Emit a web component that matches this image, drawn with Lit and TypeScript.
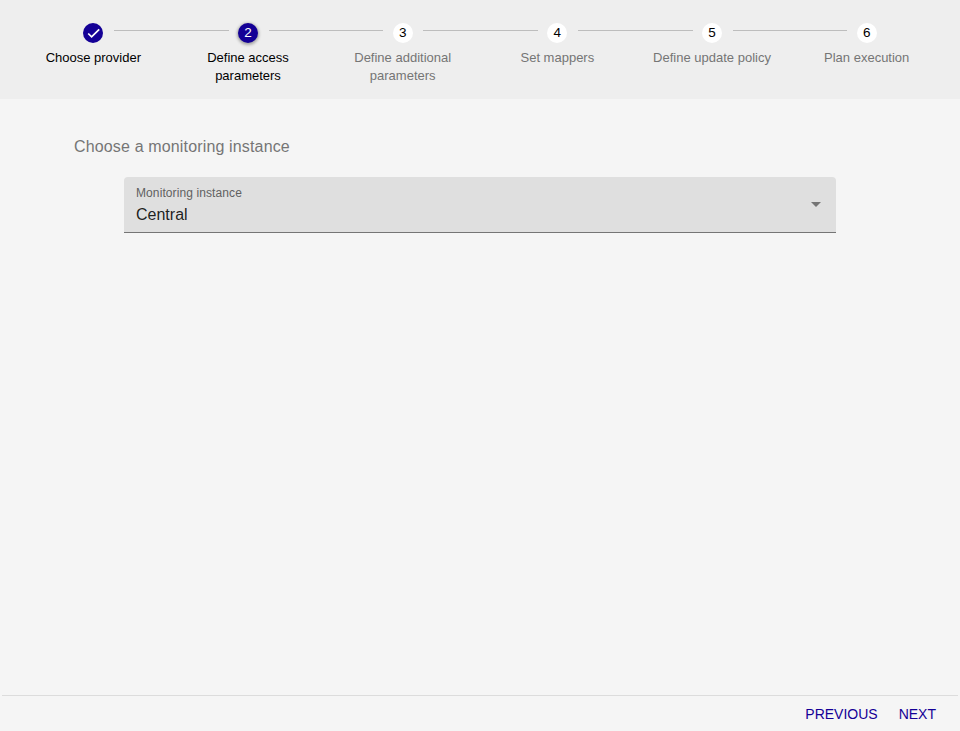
import { LitElement, html, css } from "lit";
import { customElement } from "lit/decorators.js";

const steps = [
  "Choose provider",
  "Define access parameters",
  "Define additional parameters",
  "Set mappers",
  "Define update policy",
  "Plan execution",
];

@customElement("app-root")
export class AppRoot extends LitElement {
  static styles = css`
    :host {
      display: flex;
      flex-direction: column;
      height: 731px;
      background: #f5f5f5;
      font-family: "Liberation Sans", Arial, sans-serif;
      color: rgba(0, 0, 0, 0.87);
    }
    .stepper {
      display: flex;
      height: 99px;
      box-sizing: border-box;
      padding: 23px 16px 0;
      background: #eeeeee;
    }
    .step {
      flex: 1 1 0;
      min-width: 0;
      position: relative;
      display: flex;
      flex-direction: column;
      align-items: center;
    }
    .line {
      position: absolute;
      top: 7px;
      height: 1px;
      left: calc(50% + 20.5px);
      right: calc(-50% + 19.5px);
      background: #bdbdbd;
    }
    .dot {
      width: 20px;
      height: 20px;
      border-radius: 50%;
      background: #fff;
      color: #000;
      font-size: 13.5px;
      line-height: 20px;
      text-align: center;
    }
    .dot.on {
      background: #140096;
      color: #fff;
    }
    .dot.active {
      box-shadow: 0 1px 3px 1px rgba(0, 0, 0, 0.3);
    }
    .dot svg {
      display: block;
    }
    .label {
      margin-top: 6px;
      padding: 0 10px;
      font-size: 13px;
      line-height: 18px;
      text-align: center;
      color: #757575;
    }
    .label.on {
      color: #000;
    }
    .body {
      flex: 1;
      padding: 38px 74px 0;
    }
    .title {
      font-size: 16px;
      line-height: 20px;
      letter-spacing: 0.15px;
      color: #757575;
    }
    .field {
      margin: 20px 50px 0;
      height: 56px;
      box-sizing: border-box;
      border-radius: 4px 4px 0 0;
      background: #dfdfdf;
      border-bottom: 1px solid #757575;
      padding: 9px 12px 0;
      position: relative;
    }
    .field small {
      display: block;
      font-size: 12px;
      line-height: 14px;
      letter-spacing: 0.1px;
      color: #616161;
    }
    .field span {
      display: block;
      margin-top: 5px;
      font-size: 16px;
      line-height: 20px;
    }
    .arrow {
      position: absolute;
      right: 15px;
      top: 25px;
      width: 0;
      height: 0;
      border: 5px solid transparent;
      border-bottom: 0;
      border-top-color: #757575;
    }
    .footer {
      margin: 0 2px;
      height: 36px;
      box-sizing: border-box;
      border-top: 1px solid #dcdcdc;
      display: flex;
      justify-content: flex-end;
      align-items: center;
      gap: 21px;
      padding-right: 22px;
    }
    .footer button {
      border: 0;
      padding: 0;
      background: none;
      font: inherit;
      font-size: 14px;
      color: #140096;
    }
  `;

  render() {
    return html`
      <div class="stepper">
        ${steps.map(
          (s, i) => html`
            <div class="step">
              ${i < steps.length - 1 ? html`<div class="line"></div>` : ""}
              <div class="dot ${i < 2 ? "on" : ""} ${i === 1 ? "active" : ""}">
                ${i === 0
                  ? html`<svg width="20" height="20" viewBox="0 0 20 20"><path d="M5.2 10.5l3.4 3.4 7.6-7.6" fill="none" stroke="#fff" stroke-width="1.7"/></svg>`
                  : i + 1}
              </div>
              <div class="label ${i < 2 ? "on" : ""}">${s}</div>
            </div>
          `
        )}
      </div>
      <div class="body">
        <div class="title">Choose a monitoring instance</div>
        <div class="field">
          <small>Monitoring instance</small>
          <span>Central</span>
          <div class="arrow"></div>
        </div>
      </div>
      <div class="footer">
        <button>PREVIOUS</button>
        <button>NEXT</button>
      </div>
    `;
  }
}
